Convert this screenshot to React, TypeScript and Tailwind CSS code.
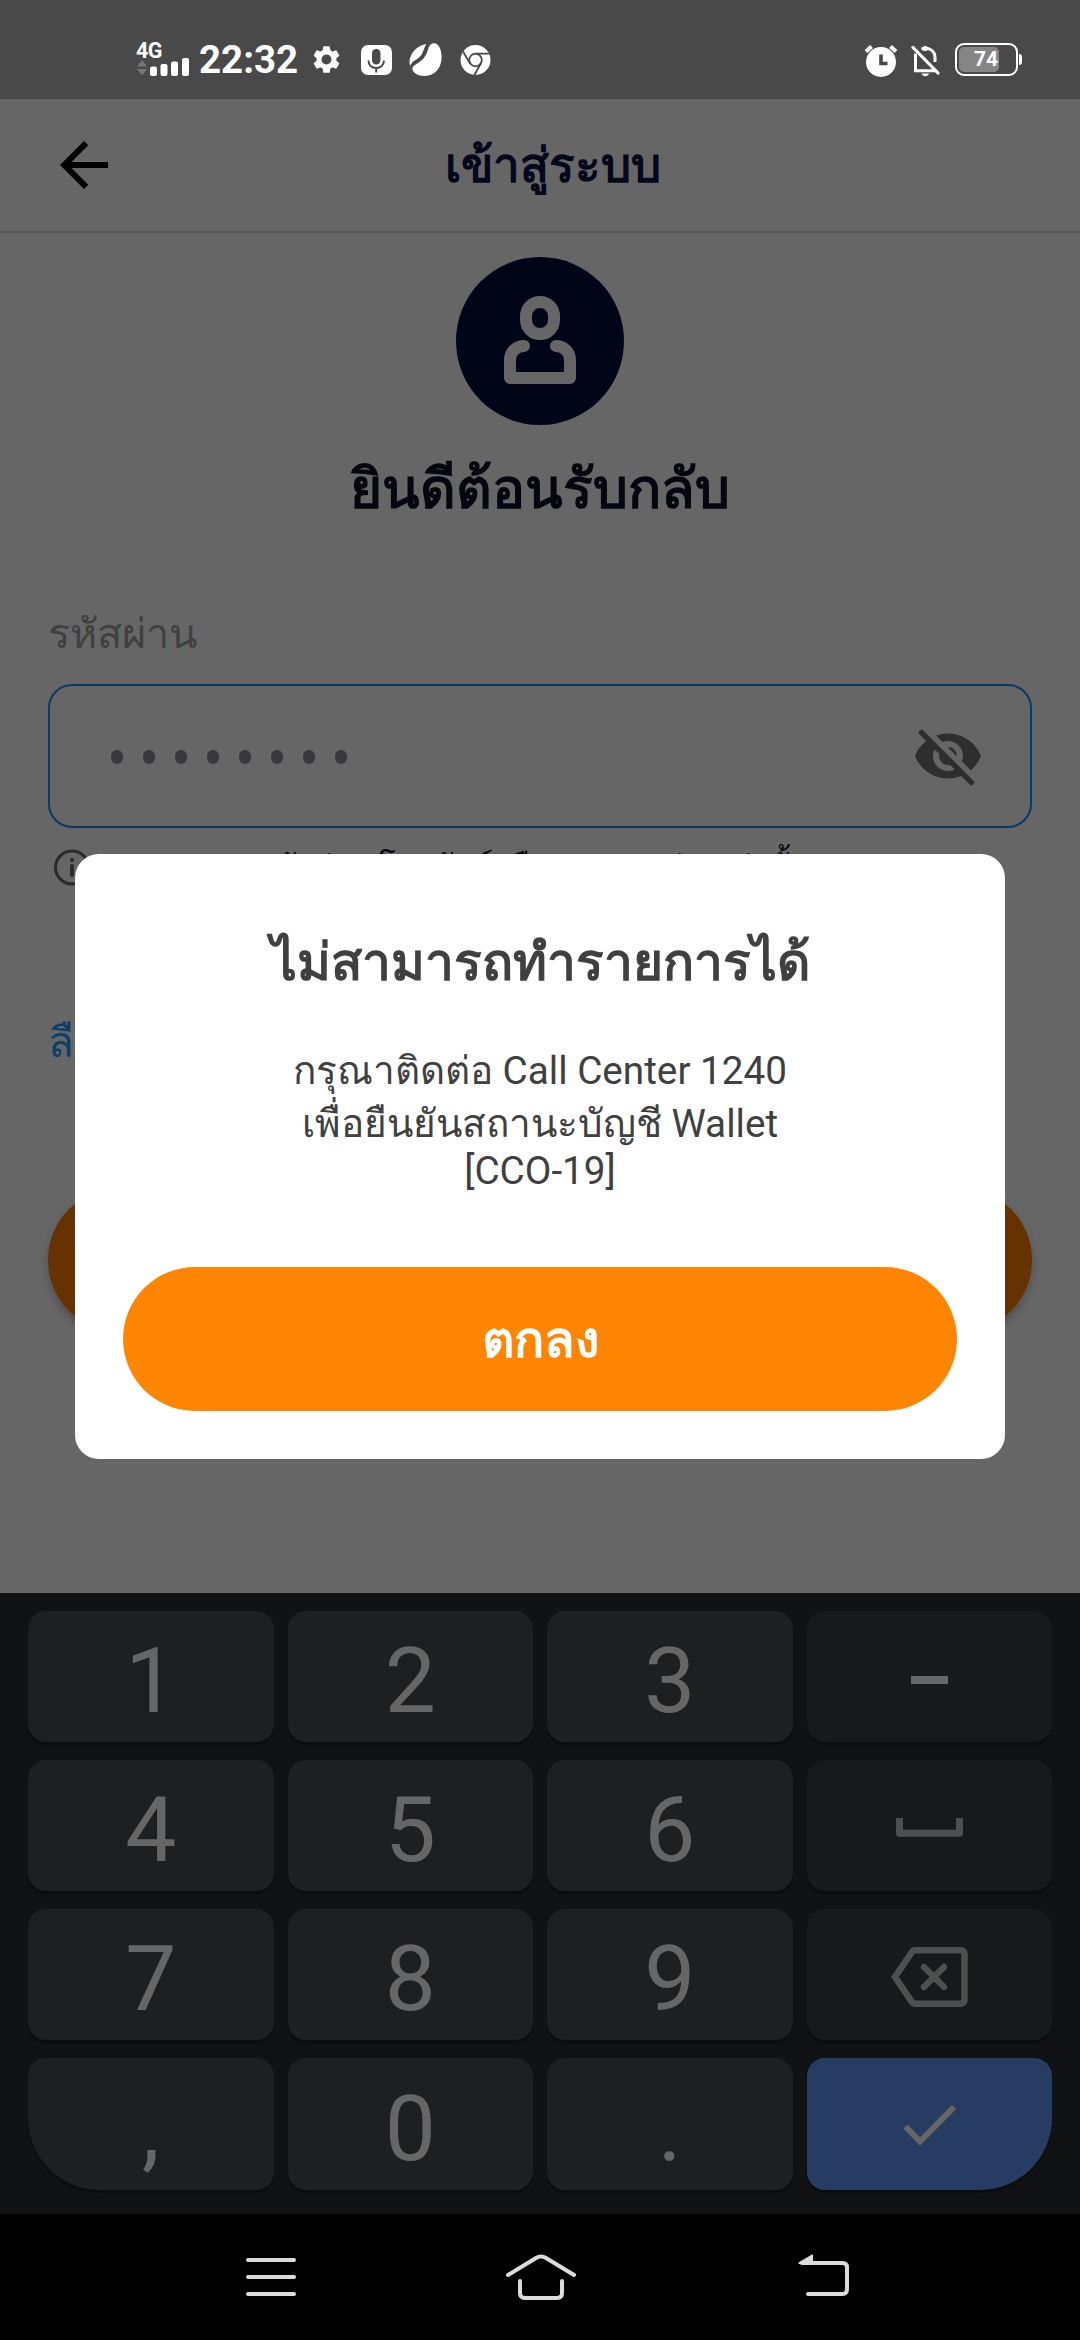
import React from 'react';
import { MdArrowBack, MdSettings, MdVisibilityOff } from 'react-icons/md';

const StatusBar: React.FC = () => {
  return (
    <header className="h-[99px] shrink-0 bg-[#494949] text-white flex items-start pt-[40px] pl-[134px]">
      <div className="w-[58px] h-[38px]">
        <div className="text-[21.500px] leading-[22px] h-[20px] font-bold tracking-tight pl-[2px]">4G</div>
        <svg className="block" width="58" height="18" viewBox="0 0 58 18" overflow="visible">
          <path d="M3 6.500l5-6.500 5 6.500zM3 9h10l-5 6.500z" fill="#767676" />
          <g fill="#fff">
            <rect x="16" y="6.500" width="7" height="9.500" rx="2" />
            <rect x="26.500" y="4" width="7" height="12" rx="2" />
            <rect x="37" y="1.500" width="7" height="14.500" rx="2" />
            <rect x="48" y="-2" width="7" height="18" rx="2" />
          </g>
        </svg>
      </div>
      <span className="w-[118px] pl-[7px] text-[38.500px] leading-[39px] font-bold">22:32</span>
      <MdSettings className="w-[33px] h-[33px] mt-[3px]" />
      <svg className="ml-[18px] mt-[5px]" width="31" height="31" viewBox="0 0 31 31">
        <rect width="31" height="30" rx="7" fill="#fff" />
        <rect x="11" y="4" width="8.500" height="15.500" rx="4.200" fill="#494949" />
        <path d="M7.500 15.500c0 4.500 3.200 7.500 7.700 7.500s7.700-3 7.700-7.500M15.200 23v4.500" fill="none" stroke="#494949" strokeWidth="2" />
      </svg>
      <svg className="ml-[17px] mt-[3px]" width="33" height="33" viewBox="0 0 33 33" fill="#fff">
        <path d="M24 .3c5.500-.8 8.600 6 8.600 13.500C32.600 25 26 33 16 33 8 33 3.800 29.500 3.400 26c-.2-2.500 2-3.800 5.600-6C16 15.500 17.500 11 19 6.500 20 3 21.500.7 24 .3z" />
        <path d="M17.500 1C9 2 .3 10 .5 19.500c0 1.300.3 2.500.8 3.300C3 18 6.500 17.500 10 14.500 14.500 10.800 14.500 5 17.500 1z" />
      </svg>
      <svg className="ml-[18px] mt-[5px]" width="31" height="31" viewBox="0 0 31 31">
        <circle cx="15.500" cy="15" r="15" fill="#fff" />
        <circle cx="15.500" cy="15" r="6.300" fill="none" stroke="#494949" strokeWidth="1.800" />
        <path d="M15.500 8.700H29M10 18.200L3 6.500M21 18.200L14.300 30" stroke="#494949" strokeWidth="1.800" />
      </svg>
      <svg className="ml-[373px] mt-[4px]" width="34" height="34" viewBox="0 0 34 34">
        <circle cx="17" cy="18" r="15" fill="#fff" />
        <path d="M2 7.500l5.500-5M32 7.500l-5.500-5" stroke="#fff" strokeWidth="4" />
        <path d="M17 10.500v9h6.500" fill="none" stroke="#494949" strokeWidth="3.600" />
      </svg>
      <svg className="ml-[13px] mt-[5px]" width="30" height="32" viewBox="0 0 30 32" fill="none" stroke="#fff">
        <path d="M4.500 8.500v17.200h21M10.500 4C18 1.500 24 6 24 12.500V17" strokeWidth="3" />
        <circle cx="14.200" cy="3.500" r="2.600" fill="#fff" stroke="none" />
        <path d="M2 2.500l25 25.500" strokeWidth="3.200" strokeLinecap="round" />
        <path d="M10.500 28.500h7.500c-1 3.600-6.500 3.600-7.500 0z" fill="#fff" stroke="none" />
      </svg>
      <div className="ml-[14px] mt-[3px] w-[63px] h-[33px] rounded-[9px] border-2 border-white p-[2px] flex">
        <div className="w-[40px] rounded-[5px] bg-[#858585] flex justify-end pr-px">
          <span className="text-[21px] leading-[25px] font-bold">74</span>
        </div>
      </div>
      <div className="ml-px mt-[14px] w-[3px] h-[11px] rounded-r bg-white" />
    </header>
  );
};

const UserAvatar: React.FC = () => {
  return (
    <div className="w-[168px] h-[168px] rounded-full bg-[#000617]">
      <svg width="168" height="168" viewBox="0 0 168 168" fill="none" stroke="#666666" strokeWidth="12" strokeLinecap="round" strokeLinejoin="round">
        <rect x="70" y="45" width="28" height="32" rx="14" />
        <path d="M68 89a14 14 0 0 0-14 14v18h60v-18a14 14 0 0 0-14-14" />
      </svg>
    </div>
  );
};

const LoginScreen: React.FC = () => {
  return (
    <main className="h-[1494px] shrink-0 bg-[#666666] flex flex-col overflow-hidden">
      <div className="h-[134px] shrink-0 border-b-2 border-[#595959] flex items-center">
        <MdArrowBack className="w-[72px] h-[72px] ml-[48px] text-black" />
        <h1 className="flex-1 pr-[95px] pt-[2px] text-center text-[47.500px] leading-[60px] font-bold text-[#04081a]">เข้าสู่ระบบ</h1>
      </div>
      <div className="flex flex-col items-center pt-[24px]">
        <UserAvatar />
        <h2 className="mt-[28px] text-[55px] leading-[72px] font-bold text-[#05060f]">ยินดีต้อนรับกลับ</h2>
      </div>
      <div className="px-[48px] pt-[81px]">
        <label className="block text-[41.500px] leading-[56px] text-[#404040]">รหัสผ่าน</label>
        <div className="mt-[22px] h-[144px] rounded-[24px] border-2 border-[#0b3a63] flex items-center justify-between pl-[61px] pr-[46px]">
          <div className="flex gap-[20px] pt-[2px]">
            {Array.from({ length: 8 }, (_, i) => (
              <span key={i} className="w-[12px] h-[14px] rounded-full bg-[#38393d]" />
            ))}
          </div>
          <MdVisibilityOff className="w-[72px] h-[72px] text-[#2e2e2e]" />
        </div>
        <div className="mt-[20px] h-[38px] flex items-center gap-[12px] pl-[6px]">
          <svg className="shrink-0" width="37" height="37" viewBox="0 0 37 37" fill="none" stroke="#2b2b2b">
            <circle cx="18" cy="18.500" r="16.500" strokeWidth="3" />
            <path d="M18 17v9" strokeWidth="4" strokeLinecap="round" />
            <circle cx="18" cy="11" r="2" fill="#2b2b2b" stroke="none" />
          </svg>
          <span className="text-[31px] leading-[38px] text-[#05060f] whitespace-nowrap">กรุณากรอกรหัสผ่าน โทรศัพท์หรือแอปของท่านเท่านั้น</span>
        </div>
        <a className="block mt-[132px] text-[42px] leading-[50px] text-[#0b3e69]">ลืมรหัสผ่าน</a>
        <button className="block mt-[120px] w-full h-[144px] rounded-full bg-[#663300] shadow-[0_5px_8px_rgba(0,0,0,0.25)] text-[40px] font-bold text-[#666666]">
          ยืนยัน
        </button>
      </div>
    </main>
  );
};

const Key: React.FC<{ children: React.ReactNode; className?: string }> = ({ children, className = 'bg-[#1e1f21] rounded-[18px]' }) => {
  return (
    <div className={`flex items-center justify-center shadow-[0_3px_1px_#0c0d0f] text-[91px] leading-none text-[#666666] ${className}`}>
      {children}
    </div>
  );
};

const Keyboard: React.FC = () => {
  return (
    <section className="h-[621px] shrink-0 bg-[#111214] px-[28px] pt-[18px]">
      <div className="grid grid-cols-4 grid-rows-[131px_131px_131px_132px] gap-x-[14px] gap-y-[18px]">
        <Key><span className="pt-[10px]">1</span></Key>
        <Key><span className="pt-[10px]">2</span></Key>
        <Key><span className="pt-[10px]">3</span></Key>
        <Key className="bg-[#18191b] rounded-[18px]">
          <span className="w-[37px] h-[8px] mt-[7px] bg-[#666666]" />
        </Key>
        <Key><span className="pt-[10px]">4</span></Key>
        <Key><span className="pt-[10px]">5</span></Key>
        <Key><span className="pt-[10px]">6</span></Key>
        <Key className="bg-[#18191b] rounded-[18px]">
          <svg className="mt-[3px]" width="67" height="19" viewBox="0 0 67 19" fill="none" stroke="#4e504f" strokeWidth="7">
            <path d="M3.500 0v15.200h60V0" strokeLinejoin="round" />
          </svg>
        </Key>
        <Key><span className="pt-[10px]">7</span></Key>
        <Key><span className="pt-[10px]">8</span></Key>
        <Key><span className="pt-[10px]">9</span></Key>
        <Key className="bg-[#18191b] rounded-[18px]">
          <svg className="mt-[5px]" width="78" height="60" viewBox="0 0 78 60" fill="none" stroke="#4e504f" strokeWidth="6.500">
            <path d="M25 3.300h46a3.500 3.500 0 0 1 3.500 3.500v46.400a3.500 3.500 0 0 1-3.500 3.500H25q-2 0-3.300-2L5 30 21.700 5.300q1.300-2 3.300-2z" />
            <path d="M34 20l20 20M54 20L34 40" strokeLinecap="round" />
          </svg>
        </Key>
        <Key className="bg-[#1e1f21] rounded-[18px] rounded-bl-[72px]"><span className="pt-[10px]">,</span></Key>
        <Key><span className="pt-[10px]">0</span></Key>
        <Key><span className="pt-[10px]">.</span></Key>
        <Key className="bg-[#273c63] rounded-[18px] rounded-br-[72px]">
          <svg className="mt-[2px] ml-[2px]" width="54" height="42" viewBox="0 0 54 42" fill="none" stroke="#666666" strokeWidth="6">
            <path d="M2.500 22.500L17 37.500 51 3" />
          </svg>
        </Key>
      </div>
    </section>
  );
};

const NavigationBar: React.FC = () => {
  return (
    <nav className="flex-1 bg-black flex items-start pt-[38px] pl-[246px]">
      <svg className="mt-[6px]" width="50" height="38" viewBox="0 0 50 38" stroke="#dcdcdc" strokeWidth="4" strokeLinecap="round">
        <path d="M2 2h46M2 19h46M2 36h46" />
      </svg>
      <svg className="ml-[210px] mt-[2px]" width="70" height="46" viewBox="0 0 70 46" fill="none" stroke="#dcdcdc" strokeWidth="4" strokeLinecap="round">
        <path d="M2 21L30 4q5-3 10 0l28 17M14 27v12q0 5 5 5h32q5 0 5-5V27" />
      </svg>
      <svg className="ml-[222px] mt-[2px]" width="52" height="44" viewBox="0 0 52 44" fill="none" stroke="#dcdcdc" strokeWidth="4">
        <path d="M4 9h40.500q4.500 0 4.500 4.500V35q0 5-4.500 5H10" strokeLinecap="round" />
        <path d="M15 .5V10H.5V8.500L13.500.7z" fill="#dcdcdc" stroke="none" />
      </svg>
    </nav>
  );
};

const ErrorDialog: React.FC = () => {
  return (
    <div role="dialog" className="absolute top-[854px] left-[75px] w-[930px] h-[605px] rounded-[24px] bg-white px-[48px] pb-[48px] flex flex-col text-center text-[#404040]">
      <h3 className="mt-[73px] text-[51.500px] leading-[72px] font-bold">ไม่สามารถทำรายการได้</h3>
      <div className="mt-[45px] text-[38.700px]">
        <p className="leading-[53px]">กรุณาติดต่อ Call Center 1240</p>
        <p className="leading-[53px]">เพื่อยืนยันสถานะบัญชี Wallet</p>
        <p className="leading-[42px]">[CCO-19]</p>
      </div>
      <button className="mt-auto h-[144px] shrink-0 rounded-full bg-[#ff8502] pt-[2px] text-[50px] font-bold text-white">ตกลง</button>
    </div>
  );
};

const App: React.FC = () => {
  return (
    <div className="relative w-[1080px] h-[2340px] flex flex-col overflow-hidden font-[Roboto,sans-serif]">
      <StatusBar />
      <LoginScreen />
      <Keyboard />
      <NavigationBar />
      <ErrorDialog />
    </div>
  );
};

export default App;
